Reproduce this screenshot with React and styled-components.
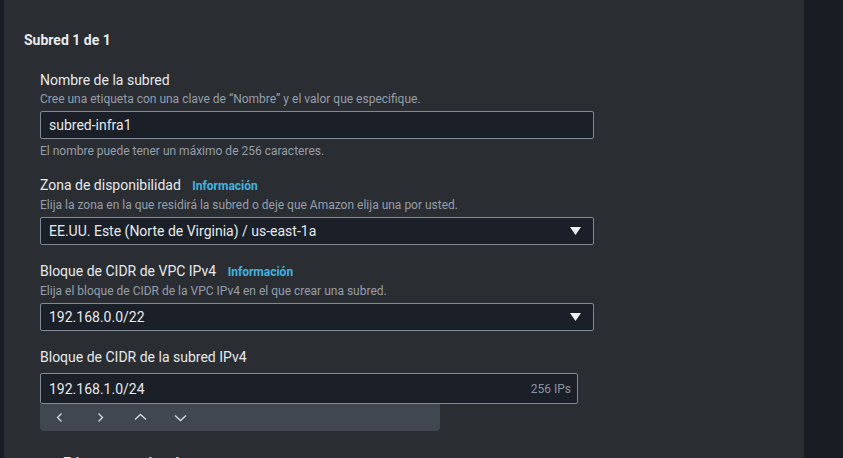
import React from "react";
import styled, { createGlobalStyle } from "styled-components";

const GlobalStyle = createGlobalStyle`
  html, body {
    margin: 0;
    padding: 0;
    background: #191c23;
    font-family: Roboto, "Noto Sans", "Liberation Sans", sans-serif;
  }
`;

function Chevron({ dir }) {
  const paths = {
    left: "M7.5 2.5 L3.5 6.5 L7.5 10.5",
    right: "M4.5 2.5 L8.5 6.5 L4.5 10.5",
    up: "M1 8.5 L6.5 3.5 L12 8.5",
    down: "M1 4.5 L6.5 9.5 L12 4.5",
  };
  return (
    <svg width="13" height="13" viewBox="0 0 13 13" fill="none">
      <path d={paths[dir]} stroke="#d5dbe1" strokeWidth="1.3" />
    </svg>
  );
}

function Caret() {
  return (
    <svg width="11" height="8" viewBox="0 0 11 8">
      <path d="M0 0 H11 L5.5 8 Z" fill="#eef0f2" />
    </svg>
  );
}

function App() {
  return (
    <>
      <GlobalStyle />
      <Page>
        <Panel>
          <Heading>Subred 1 de 1</Heading>

          <Fields>
            <Field>
              <Label>Nombre de la subred</Label>
              <Description>
                Cree una etiqueta con una clave de “Nombre” y el valor que especifique.
              </Description>
              <TextInput>subred-infra1</TextInput>
              <Hint>El nombre puede tener un máximo de 256 caracteres.</Hint>
            </Field>

            <Field>
              <Label>
                Zona de disponibilidad <InfoLink>Información</InfoLink>
              </Label>
              <Description>
                Elija la zona en la que residirá la subred o deje que Amazon elija una por usted.
              </Description>
              <Select>
                <span>EE.UU. Este (Norte de Virginia) / us-east-1a</span>
                <Caret />
              </Select>
            </Field>

            <Field>
              <Label>
                Bloque de CIDR de VPC IPv4 <InfoLink>Información</InfoLink>
              </Label>
              <Description>
                Elija el bloque de CIDR de la VPC IPv4 en el que crear una subred.
              </Description>
              <Select>
                <span>192.168.0.0/22</span>
                <Caret />
              </Select>
            </Field>

            <Field>
              <Label>Bloque de CIDR de la subred IPv4</Label>
              <CidrInput>
                <span>192.168.1.0/24</span>
                <Suffix>256 IPs</Suffix>
              </CidrInput>
              <Stepper>
                <StepButton><Chevron dir="left" /></StepButton>
                <StepButton><Chevron dir="right" /></StepButton>
                <StepButton><Chevron dir="up" /></StepButton>
                <StepButton><Chevron dir="down" /></StepButton>
              </Stepper>
            </Field>

            <Expander>
              <ExpandCaret />
              Etiquetas opcionales
            </Expander>
          </Fields>
        </Panel>
      </Page>
    </>
  );
}

export const Page = styled.div`
  display: flex;
  height: 100vh;
  overflow: hidden;
  padding-left: 4px;
  background: #191c23;
`;

export const Panel = styled.div`
  width: 800px;
  flex-shrink: 0;
  background: #2a2d32;
  padding: 30px 20px 0 20px;
  box-sizing: border-box;
`;

export const Heading = styled.h2`
  margin: 0;
  font-size: 14px;
  line-height: 20px;
  font-weight: 700;
  color: #e9ebed;
`;

export const Fields = styled.div`
  display: flex;
  flex-direction: column;
  gap: 16px;
  padding-left: 16px;
  margin-top: 20px;
`;

export const Field = styled.div`
  display: flex;
  flex-direction: column;
`;

export const Label = styled.div`
  font-size: 14px;
  line-height: 20px;
  color: #e6e9ec;
  margin-bottom: 1px;
`;

export const InfoLink = styled.span`
  margin-left: 8px;
  font-size: 12px;
  font-weight: 700;
  color: #42b4e0;
`;

export const Description = styled.div`
  font-size: 12px;
  line-height: 16px;
  color: #959faa;
`;

export const TextInput = styled.div`
  margin-top: 4px;
  width: 554px;
  height: 28px;
  box-sizing: border-box;
  padding: 0 8px;
  display: flex;
  align-items: center;
  background: #1a1f28;
  border: 1px solid #7f8a96;
  border-radius: 2px;
  font-size: 14px;
  color: #e6e9ec;
`;

export const Hint = styled.div`
  margin-top: 4px;
  font-size: 12px;
  line-height: 16px;
  color: #959faa;
`;

export const Select = styled(TextInput)`
  justify-content: space-between;
  padding-right: 12px;
`;

export const CidrInput = styled(TextInput)`
  margin-top: 5px;
  width: 538px;
  height: 31px;
  justify-content: space-between;
  padding-right: 6px;
`;

export const Suffix = styled.span`
  font-size: 12px;
  color: #8a949f;
`;

export const Stepper = styled.div`
  display: flex;
  width: 400px;
  height: 27px;
  background: #414750;
  border-radius: 0 0 4px 4px;
`;

export const StepButton = styled.div`
  width: 40px;
  display: flex;
  align-items: center;
  justify-content: center;
`;

export const Expander = styled.div`
  display: flex;
  align-items: center;
  gap: 8px;
  margin-top: 6px;
  padding-left: 5px;
  font-size: 14px;
  line-height: 20px;
  font-weight: 700;
  color: #e9ebed;
`;

export const ExpandCaret = styled.span`
  width: 0;
  height: 0;
  border-left: 5px solid transparent;
  border-right: 5px solid transparent;
  border-top: 6px solid #e9ebed;
`;

export default App;
